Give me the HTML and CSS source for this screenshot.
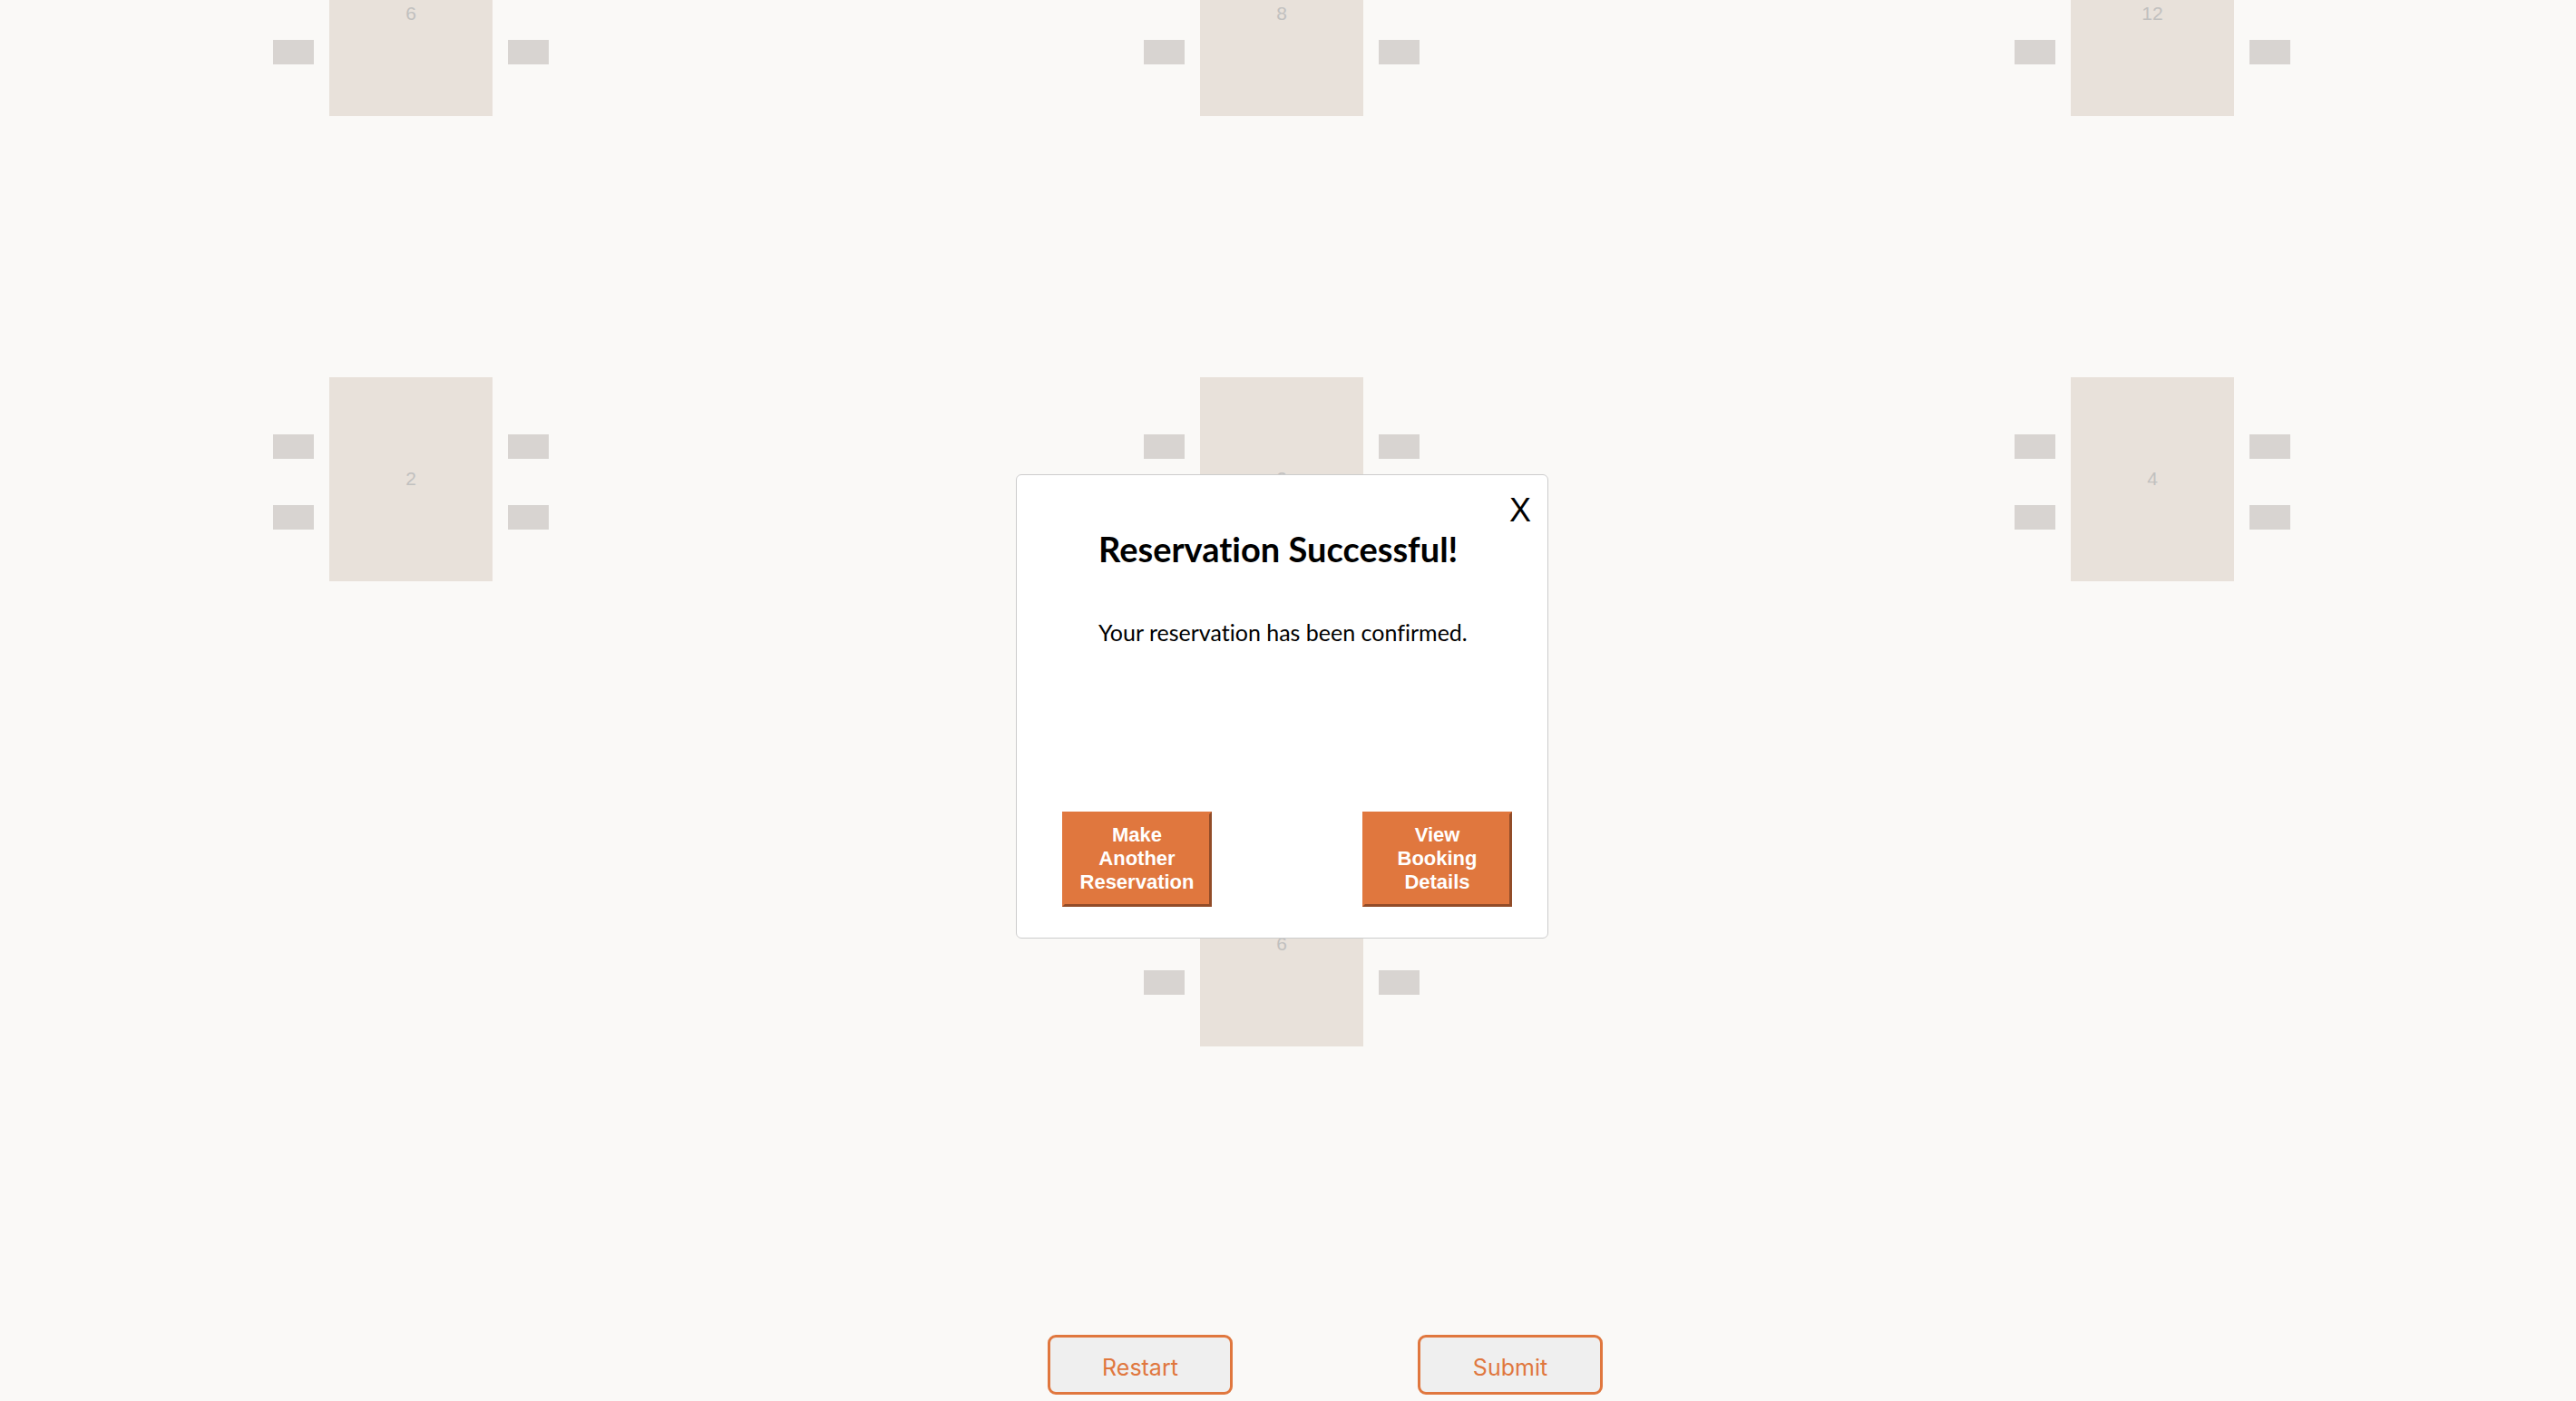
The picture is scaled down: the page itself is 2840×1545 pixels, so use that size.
FILE: index.html
```html
<!DOCTYPE html>
<html lang="en">
<head>
<meta charset="utf-8">
<meta name="viewport" content="width=device-width, initial-scale=1">
<title>Table reservation</title>
<link rel="stylesheet" href="styles.css">
</head>
<body>
<main class="page">
  <section class="floor" aria-label="Floor plan">
    <div class="spot">
      <div class="chairs"><span class="chair"></span><span class="chair"></span></div>
      <button class="table" type="button" disabled>6</button>
      <div class="chairs"><span class="chair"></span><span class="chair"></span></div>
    </div>
    <div class="spot">
      <div class="chairs"><span class="chair"></span><span class="chair"></span></div>
      <button class="table" type="button" disabled>8</button>
      <div class="chairs"><span class="chair"></span><span class="chair"></span></div>
    </div>
    <div class="spot">
      <div class="chairs"><span class="chair"></span><span class="chair"></span></div>
      <button class="table" type="button" disabled>12</button>
      <div class="chairs"><span class="chair"></span><span class="chair"></span></div>
    </div>
    <div class="spot">
      <div class="chairs"><span class="chair"></span><span class="chair"></span></div>
      <button class="table" type="button" disabled>2</button>
      <div class="chairs"><span class="chair"></span><span class="chair"></span></div>
    </div>
    <div class="spot">
      <div class="chairs"><span class="chair"></span><span class="chair"></span></div>
      <button class="table" type="button" disabled>2</button>
      <div class="chairs"><span class="chair"></span><span class="chair"></span></div>
    </div>
    <div class="spot">
      <div class="chairs"><span class="chair"></span><span class="chair"></span></div>
      <button class="table" type="button" disabled>4</button>
      <div class="chairs"><span class="chair"></span><span class="chair"></span></div>
    </div>
    <div class="spot spot-center">
      <div class="chairs"><span class="chair"></span><span class="chair"></span></div>
      <button class="table" type="button" disabled>6</button>
      <div class="chairs"><span class="chair"></span><span class="chair"></span></div>
    </div>
  </section>
  <div class="actions">
    <button class="action" type="button">Restart</button>
    <button class="action" type="button">Submit</button>
  </div>
</main>
<div class="overlay">
  <div class="modal" role="dialog" aria-labelledby="modal-title">
    <button class="close" type="button" aria-label="Close">X</button>
    <div class="message">
      <h2 class="title" id="modal-title">Reservation Successful!</h2>
      <p class="text">Your reservation has been confirmed.</p>
    </div>
    <div class="choices">
      <button class="choice" type="button">Make Another Reservation</button>
      <button class="choice" type="button">View Booking Details</button>
    </div>
  </div>
</div>
</body>
</html>
```
FILE: styles.css
```css
:root {
  --accent: #e0773e;
  --accent-dark: #924c28;
}

* {
  box-sizing: border-box;
}

body {
  margin: 0;
  min-height: 100vh;
  background: #faf9f7;
  color: #000;
  font-family: "Liberation Sans", Arial, sans-serif;
  overflow-x: hidden;
}

button {
  font-family: inherit;
  cursor: pointer;
}

.page {
  padding-right: 14px;
}

/* Floor plan: the first row starts above the fold */
.floor {
  display: grid;
  grid-template-columns: repeat(3, 1fr);
  grid-auto-rows: 459px;
  gap: 54px;
  margin-top: -214px;
}

.spot {
  display: flex;
  align-items: center;
  justify-content: center;
  gap: 17px;
}

.spot-center {
  grid-column: 2;
}

.table {
  width: 180px;
  height: 225px;
  padding: 0 0 2px;
  border: 0;
  background: #e8e1da;
  color: #c1c0bf;
  font-size: 21px;
}

.chairs {
  display: grid;
  gap: 51px;
  padding-top: 6px;
}

.chair {
  width: 45px;
  height: 27px;
  background: #d8d4d1;
}

.actions {
  display: flex;
  justify-content: center;
  gap: 204px;
  padding: 201px 0 0 96px;
}

.action {
  width: 204px;
  height: 66px;
  padding: 6px 0 0;
  border: 3px solid var(--accent);
  border-radius: 9px;
  background: #efefef;
  color: var(--accent);
  font-family: Inter, sans-serif;
  font-size: 25px;
}

.overlay {
  position: fixed;
  inset: 0;
  display: flex;
  align-items: center;
  justify-content: center;
  padding: 13px 13px 0 0;
}

.modal {
  display: flex;
  flex-direction: column;
  width: 587px;
  padding: 17px 39px 34px 50px;
  border: 1px solid #ccc;
  border-radius: 6px;
  background: #fff;
}

.close {
  align-self: flex-end;
  margin-right: -21px;
  padding: 0;
  border: 0;
  background: none;
  color: #000;
  font-size: 36px;
  line-height: 44px;
}

.message {
  padding: 0 40px;
  font-family: "Trebuchet MS", Lato, sans-serif;
  font-variant-ligatures: none;
}

.title {
  margin: 0;
  font-size: 38px;
  line-height: 40px;
  white-space: nowrap;
}

.text {
  margin: 58px 0 0;
  font-size: 25px;
  line-height: 28px;
  white-space: nowrap;
}

.choices {
  display: flex;
  justify-content: space-between;
  margin-top: 184px;
}

.choice {
  width: 165px;
  min-height: 105px;
  padding: 0 12px 1px;
  border: 3px solid;
  border-color: var(--accent) var(--accent-dark) var(--accent-dark) var(--accent);
  background: var(--accent);
  color: #fff;
  font-size: 22px;
  font-weight: 700;
  line-height: 26px;
}
```
